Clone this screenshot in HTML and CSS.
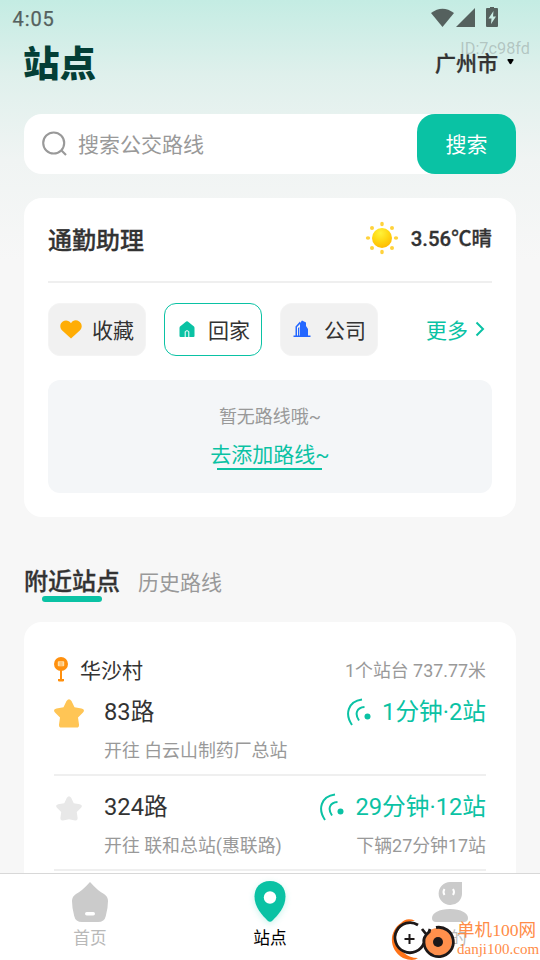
FILE: index.html
```html
<!DOCTYPE html>
<html lang="zh-CN">
<head>
<meta charset="utf-8">
<title>站点</title>
<link rel="stylesheet" href="styles.css">
</head>
<body>
<div class="app">
  <div class="status">
    <span class="time">4:05</span>
    <svg class="status-icons" width="70" height="24" viewBox="0 0 70 24">
      <path d="M1 8Q12.500 -.5 24 8L12.500 22Z"/>
      <path d="M26 22L45 3V22Z"/>
      <path fill-rule="evenodd" d="M60 3V2H64V3H67Q68 3 68 4V21Q68 22 67 22H57Q56 22 56 21V4Q56 3 57 3ZM63.500 6L58.500 13.500H61.500L61 19L66 11.500H63Z"/>
    </svg>
  </div>
  <header class="header">
    <h1>站点</h1>
    <div class="city"><span>广州市</span><svg width="7" height="6" viewBox="0 0 7 6"><path d="M1.300 0H5.700Q7 0 6.400 1.300L4.500 4.500Q3.500 6 2.500 4.500L.6 1.300Q0 0 1.300 0Z"/></svg></div>
    <span class="device-id">ID:7c98fd</span>
  </header>
  <div class="search">
    <svg width="26" height="26" viewBox="0 0 26 26"><circle cx="11.700" cy="12" r="10.500"/><path d="M19.500 19.500L24 24"/></svg>
    <span class="placeholder">搜索公交路线</span>
    <span class="search-btn">搜索</span>
  </div>

  <section class="card assistant">
    <div class="assistant-head">
      <h2>通勤助理</h2>
      <div class="weather">
        <svg width="34" height="34" viewBox="-17 -17 34 34">
          <defs><radialGradient id="sun" cx=".42" cy=".25" r=".8"><stop offset="0" stop-color="#fff23a"/><stop offset=".5" stop-color="#ffd814"/><stop offset="1" stop-color="#ffb700"/></radialGradient></defs>
          <circle r="10" fill="url(#sun)"/>
          <g fill="#ffd23c">
            <ellipse cx="0" cy="-14" rx="1.800" ry="2.200"/><ellipse cx="0" cy="14" rx="1.800" ry="2.200"/>
            <ellipse cx="-14" cy="0" rx="2.200" ry="1.800"/><ellipse cx="14" cy="0" rx="2.200" ry="1.800"/>
            <circle cx="-10" cy="-10" r="2"/><circle cx="10" cy="-10" r="2"/><circle cx="-10" cy="10" r="2"/><circle cx="10" cy="10" r="2"/>
          </g>
        </svg>
        <span>3.56℃晴</span>
      </div>
    </div>
    <div class="chips">
      <div class="chip fav"><svg width="22" height="19" viewBox="0 0 22 19"><path fill="#ffad05" d="M11 18.500L2.200 10.500C-.8 7.500 0 3.300 2.800 1.400C5.500-.3 9 .3 11 3.200C13-.3 16.500-.3 19.200 1.400C22 3.300 22.800 7.500 19.800 10.500Z"/></svg><span>收藏</span></div>
      <div class="chip active"><svg width="16" height="17" viewBox="0 0 16 17"><path fill="#0ac2a4" d="M7.200.5Q8 0 8.800.5L15 5.500Q15.500 6 15.500 7V15Q15.500 16 14.500 16H1.500Q.5 16 .5 15V7Q.5 6 1 5.500Z"/><path d="M6.200 16V10.500Q8 8.800 9.800 10.500V16" fill="none" stroke="#fff"/></svg><span>回家</span></div>
      <div class="chip office"><svg width="18" height="18" viewBox="0 0 18 18" fill="#2467ff"><path d="M7 3L9 .5L13 2.500V6L15 9V16H7Z"/><path d="M2.500 16V6.500L7 1.500V4L4 7V16ZM5 8L6.300 7V16H5Z"/><path d="M.5 15.500H17.500V17H.5Z"/></svg><span>公司</span></div>
      <div class="more"><span>更多</span><svg width="10" height="16" viewBox="0 0 10 16"><path d="M1.500 1.500L8 8L1.500 14.500"/></svg></div>
    </div>
    <div class="empty">
      <p>暂无路线哦~</p>
      <a class="add">去添加路线~</a>
    </div>
  </section>

  <div class="tabs">
    <span class="tab current">附近站点</span>
    <span class="tab">历史路线</span>
  </div>

  <section class="card nearby">
    <div class="station">
      <svg width="14" height="25" viewBox="0 0 14 25"><g fill="#ff900e"><circle cx="7" cy="7" r="7"/><path d="M6 13H8V22H10Q10.500 24.500 9 24.500H5Q3.500 24.500 4 22H6Z"/></g><rect x="3.800" y="4.200" width="6.400" height="5" rx=".8" fill="#ffe0aa"/><path d="M5 6H9M5 8H9M7 4.500V9" stroke="#ffad4b" stroke-width=".7"/></svg>
      <span class="station-name">华沙村</span>
      <span class="note">1个站台 737.77米</span>
    </div>
    <div class="route">
      <div class="star"><svg width="30" height="29" viewBox="0 0 30 29"><path fill="#ffc555" d="M12.500 2Q15-1.500 17.500 2L20.500 8.300L27.500 9.500Q31.500 10.500 29 13.500L24 18.500L25 25.500Q25.200 29 22 28.500H8Q4.800 29 5 25.500L6 18.500L1 13.500Q-1.500 10.500 2.500 9.500L9.500 8.300Z"/></svg></div>
      <div class="route-info">
        <div class="line"><strong>83路</strong><span class="eta"><svg width="24" height="28" viewBox="0 0 24 28"><path d="M15 1.500C1 3.500 -2.500 16 5 27M17.500 9C9.500 9.500 7.500 16 12 22.500"/><circle cx="20.500" cy="18.500" r="3"/></svg><span>1分钟·2站</span></span></div>
        <div class="sub"><span>开往 白云山制药厂总站</span></div>
      </div>
    </div>
    <div class="route">
      <div class="star"><svg width="26" height="25" viewBox="0 0 30 29"><path fill="#e8e8e8" d="M12.500 2Q15-1.500 17.500 2L20.500 8.300L27.500 9.500Q31.500 10.500 29 13.500L24 18.500L25 25.500Q25.200 29 22 28.500L15 27L8 28.500Q4.800 29 5 25.500L6 18.500L1 13.500Q-1.500 10.500 2.500 9.500L9.500 8.300Z"/></svg></div>
      <div class="route-info">
        <div class="line"><strong>324路</strong><span class="eta"><svg width="24" height="28" viewBox="0 0 24 28"><path d="M15 1.500C1 3.500 -2.500 16 5 27M17.500 9C9.500 9.500 7.500 16 12 22.500"/><circle cx="20.500" cy="18.500" r="3"/></svg><span>29分钟·12站</span></span></div>
        <div class="sub"><span>开往 联和总站(惠联路)</span><span>下辆27分钟17站</span></div>
      </div>
    </div>
  </section>

  <nav class="nav">
    <div class="nav-item">
      <svg width="44" height="48" viewBox="0 0 44 48"><path fill="#cbcbcb" d="M22 4Q30 13 36 16Q40 18.500 40 23Q40 30 37.800 38Q36.500 44 30 44H14Q7.500 44 6.200 38Q4 30 4 23Q4 18.500 8 16Q14 13 22 4Z"/><rect x="17" y="34" width="10" height="3.500" rx="1.700" fill="#fff"/></svg>
      <span>首页</span>
    </div>
    <div class="nav-item selected">
      <svg width="44" height="48" viewBox="0 0 44 48"><path d="M22 3C12 3 6.500 10 6.500 18.500C6.500 29 14 37 19.500 42.500Q22 45 24.500 42.500C30 37 37.500 29 37.500 18.500C37.500 10 32 3 22 3Z" fill="#0ac2a4"/><circle cx="22" cy="19.500" r="6.200" fill="#fff"/></svg>
      <span>站点</span>
    </div>
    <div class="nav-item">
      <svg width="44" height="48" viewBox="0 0 44 48"><g fill="#cbcbcb"><path d="M22 4H34V16A11.700 11.500 0 1 1 22 4Z"/><path d="M22 31C33 31 40 35 40 40Q40 44 36 44H8Q4 44 4 40C4 35 11 31 22 31Z"/></g><path d="M16.500 11Q14.500 14 16.500 17M25 11Q27 14 25 17" fill="none" stroke="#fff" stroke-width="2"/></svg>
      <span>我的</span>
    </div>
  </nav>
  <div class="watermark">
    <svg width="66" height="44" viewBox="0 0 66 44" fill="none">
      <path d="M24 2.500Q15-1 10 5C-2 13-3 31 12 40Q22 44 27 40Q18 40 12 34C2 27 3 14 13 6Q18 3 24 2.500Z" fill="#ff7318"/>
      <circle cx="19" cy="21" r="14" fill="#fff"/>
      <path d="M27 7A15 15 0 1 0 33 25" stroke="#1d1818" stroke-width="2.800"/>
      <path d="M18.500 16V26M13.500 21H23.500" stroke="#1d1818" stroke-width="2"/>
      <circle cx="47" cy="24" r="14" fill="#ff904c"/>
      <path d="M45 9.500A14.700 14.700 0 1 1 33 25Q32 21 35 17L39 13M31 11L35 16M39 11L38 14" stroke="#1d1818" stroke-width="2.800"/>
      <circle cx="47" cy="24" r="5" fill="#1d1818"/>
    </svg>
    <div class="watermark-text"><b>单机100网</b><span>danji100.com</span></div>
  </div>
</div>
</body>
</html>
```
FILE: styles.css
```css
* { box-sizing: border-box; margin: 0; padding: 0; }
body { font-family: Roboto, "Noto Sans CJK SC", sans-serif; color: #333; }
svg { display: block; flex: none; }
.app {
  position: relative;
  width: 540px;
  height: 960px;
  overflow: hidden;
  display: flex;
  flex-direction: column;
  background: linear-gradient(#c4ece3 0, #dff0ec 75px, #f0f4f3 160px, #f7f7f7 260px);
}
.status { height: 37px; padding: 5px 40px 0 12.500px; display: flex; justify-content: space-between; color: #55615e; }
.time { font-size: 20px; line-height: 28px; letter-spacing: .9px; -webkit-text-stroke: .25px; }
.status-icons { fill: #55615e; }
.header { position: relative; height: 77px; padding: 0 26px 23px 23px; display: flex; align-items: center; justify-content: space-between; }
h1 { font-size: 36.500px; line-height: 54px; font-weight: 900; color: #043f36; padding-top: 1px; }
.city { display: flex; align-items: center; gap: 9px; font-size: 21px; line-height: 30px; padding-bottom: 1px; font-weight: 500; -webkit-text-stroke: .3px; }
.city svg { fill: #000; margin-top: -3px; }
.device-id { position: absolute; right: 10px; top: 2px; font-size: 16.300px; line-height: 20px; color: rgba(130, 140, 138, .42); }
.search { height: 60px; flex: none; margin: 0 24px; padding-left: 17.500px; border-radius: 18px; background: #fff; display: flex; align-items: center; }
.search svg { fill: none; stroke: #999; stroke-width: 2.100; }
.placeholder { margin: -2px 0 0 10.500px; font-size: 21px; color: #999; }
.search-btn { margin-left: auto; width: 99px; height: 60px; line-height: 62px; border-radius: 18px; background: #0ac2a4; color: #fff; text-align: center; font-size: 21px; }
.card { flex: none; margin: 0 24px; border-radius: 18px; background: #fff; }
.assistant { margin-top: 24px; height: 319px; padding: 0 24px; }
.assistant-head { height: 85px; border-bottom: 2px solid #efefef; display: flex; align-items: center; justify-content: space-between; }
h2 { font-size: 24px; font-weight: 500; line-height: 36px; -webkit-text-stroke: .3px; padding-top: 2px; }
.weather { display: flex; align-items: center; gap: 12px; font-size: 20.400px; font-weight: 500; -webkit-text-stroke: .3px; }
.weather svg { margin-top: -3px; }
.weather span { margin-top: -5px; }
.chips { display: flex; height: 53px; margin-top: 20px; gap: 18.500px; }
.chip { width: 97.500px; border-radius: 12px; background: #f1f1f1; display: flex; align-items: center; font-size: 21px; padding-left: 11px; gap: 10px; border: 1px solid #f4f4f4; }
.chip svg { margin-top: -1px; }
.chip span, .more span { margin-top: -2px; }
.chip.active { background: #fff; border-color: #0ac2a4; padding-left: 14px; gap: 13px; }
.chip.office { padding-left: 12px; gap: 13px; }
.more { margin-left: auto; padding-right: 7px; display: flex; align-items: center; gap: 7px; color: #0ac2a4; font-size: 21px; }
.more svg { fill: none; stroke: #0ac2a4; stroke-width: 2; margin-top: -2px; }
.empty { height: 113px; margin-top: 24px; padding-top: 23px; border-radius: 12px; background: #f4f6f8; display: flex; flex-direction: column; align-items: center; }
.empty p { font-size: 18px; line-height: 27px; color: #999; }
.add { margin-top: 9px; font-size: 21px; line-height: 32px; color: #0ac2a4; display: flex; flex-direction: column; align-items: center; }
.add::after { content: ""; width: 105px; height: 2px; margin-top: -3px; background: #0ac2a4; }
.tabs { height: 105px; flex: none; padding: 47px 24px 0; display: flex; gap: 18px; }
.tab { font-size: 21px; line-height: 38px; color: #999; }
.tab.current { display: flex; flex-direction: column; align-items: center; font-size: 24px; line-height: 36px; font-weight: 500; color: #333; -webkit-text-stroke: .3px; }
.tab.current::after { content: ""; width: 60px; height: 6px; margin-top: -4px; border-radius: 3px; background: #0ac2a4; }
.nearby { height: 280px; padding: 30px 30px 0; }
.station { height: 36px; display: flex; align-items: center; }
.station svg { margin-top: -2px; }
.station-name { margin: -2px 0 0 12px; font-size: 21px; }
.note { margin: -2px 0 0 auto; font-size: 17.900px; color: #999; }
.route { display: flex; height: 95px; border-bottom: 2px solid #efefef; }
.route:nth-child(2) { height: 88px; }
.route + .route { padding-top: 7px; }
.star { width: 30px; height: 50px; margin-right: 20px; display: flex; justify-content: center; align-items: center; }
.route-info { flex: 1; }
.line { height: 50px; display: flex; align-items: center; justify-content: space-between; font-size: 23.700px; }
.line strong { font-weight: 400; margin-top: -6px; }
.eta { color: #0ac2a4; display: flex; align-items: center; gap: 11px; }
.eta span { margin-top: -6px; }
.eta svg { stroke: #0ac2a4; stroke-width: 2; fill: none; margin-top: -3px; }
.eta circle { fill: #0ac2a4; stroke: none; }
.sub { height: 27px; line-height: 27px; display: flex; justify-content: space-between; font-size: 17.900px; color: #999; margin-top: -1px; }
.nav { position: absolute; left: 0; right: 0; bottom: 0; height: 87px; border-top: 1px solid #d8d8d8; background: #fff; display: grid; grid-template-columns: repeat(3, 1fr); }
.nav-item { padding-top: 4px; display: flex; flex-direction: column; align-items: center; font-size: 16.700px; line-height: 26px; color: #b9b9b9; }
.nav-item.selected { color: #000; }
.selected svg { filter: drop-shadow(0 2px 3px rgba(10, 194, 164, .22)); }
.watermark { position: absolute; left: 391px; top: 918px; display: flex; }
.watermark-text { display: flex; flex-direction: column; color: #ff8c47; white-space: nowrap; }
.watermark-text b { font: 17.600px/25px "Liberation Serif", "Noto Sans CJK SC", serif; }
.watermark-text span { font: 15px/12px "Liberation Serif", serif; }
```
